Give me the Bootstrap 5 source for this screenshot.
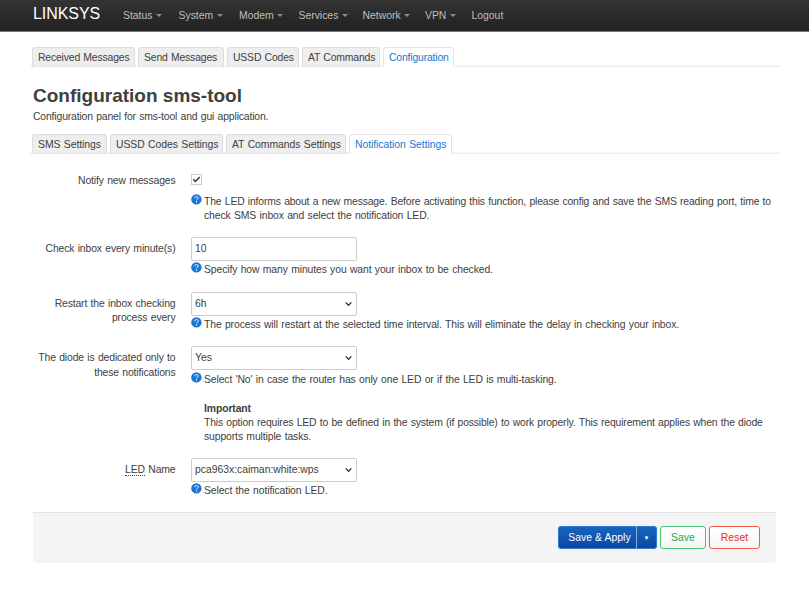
<!DOCTYPE html>
<html lang="en">
<head>
<meta charset="utf-8">
<meta name="viewport" content="width=device-width, initial-scale=1">
<title>LINKSYS - Configuration sms-tool</title>
<link href="https://cdn.jsdelivr.net/npm/bootstrap@5.3.0/dist/css/bootstrap.min.css" rel="stylesheet">
<style>
body{font-family:"Liberation Sans",Arial,sans-serif;font-size:10.4px;line-height:14.3px;letter-spacing:-.1px;word-spacing:.6px;color:#404040;background:#fff}
.topbar{height:32px;padding:0 0 0 33px;background:linear-gradient(#333,#222);border-bottom:1px solid #777}
.topbar .navbar-brand{font-size:16px;line-height:20px;letter-spacing:-.05px;color:#fff;padding:0;margin:0 23px 3px 0;width:67px}
.topbar .navbar-nav{display:grid;grid-template-columns:55.5px 60.5px 59.5px 64px 62.5px 46.5px auto}
.topbar .navbar-nav .nav-link{color:#bfbfbf;padding:0;line-height:30px;letter-spacing:0}
.topbar .dropdown-toggle::after{border-top:3px solid;border-left:3px solid transparent;border-right:3px solid transparent;margin-left:3.5px;vertical-align:1.5px;opacity:.65}
.page{padding:15px 29px 0 30px}
.tabs{display:grid;height:20px;gap:3px;padding-left:2px;border-bottom:0;box-shadow:inset 0 -1.5px #eee}
.tabs-main{grid-template-columns:103px 86px 72px 78px 71px;letter-spacing:-.16px}
.tabs-sub{grid-template-columns:75px 113px 120px 103px;letter-spacing:-.05px}
.tabs .nav-link{height:20px;padding:3px 5px 0;color:#404040;background:#eee;border:1px solid #ddd;border-bottom:1px solid #e6e6e6;border-radius:3px 3px 0 0;margin:0;white-space:nowrap}
.tabs .nav-link.active{color:#1976d2;background:#fff;border-color:#e5e5e5;border-bottom-color:#fff}
h2{font-size:19px;line-height:24px;font-weight:700;margin:17px 0 2px 3px;letter-spacing:0;word-spacing:0}
.descr{margin:0 0 9.7px 3px;letter-spacing:-.15px}
.rows{margin-left:3px}
.cfg-label{width:142.5px;margin-right:15.5px;text-align:right;padding-top:5px;flex:none;white-space:nowrap;letter-spacing:-.13px}
.ctl{width:166px;height:24px;min-height:24px;font-size:10.4px;line-height:14px;padding:4px 3px;border:1px solid #ccc;border-radius:2px;color:#404040;letter-spacing:-.02px}
select.ctl{background-size:7px 6px;background-position:right 4px center;background-image:url("data:image/svg+xml,%3csvg xmlns='http://www.w3.org/2000/svg' viewBox='0 0 7 6'%3e%3cpath fill='none' stroke='%23333' stroke-width='1.3' d='M.6 1.4l2.9 2.9 2.9-2.9'/%3e%3c/svg%3e")}
.hint{padding-left:13px;position:relative;margin-top:2.5px;width:586px;white-space:nowrap;letter-spacing:-.11px}
.hint svg{position:absolute;left:0;top:-1px;width:11px;height:11px}
.snug{letter-spacing:-.157px}
.tick{width:11px;height:11px;display:block}
abbr{text-decoration:none!important;border-bottom:1px dotted #404040;cursor:help}
.r1{height:62.5px;margin-top:20.3px}
.r1 .cfg-label{padding-top:0;margin-top:-.5px}
.r1 .hint{margin-top:9.3px}
.r2{height:55px}
.r3{height:54.7px}
.r4{height:111.5px}
.r5{height:54.3px}
.actions{height:51px;width:743px;padding:0 16px 1px 0;background:#f4f4f4;border-top:1px solid #e2e2e2;border-radius:0 0 3px 3px;gap:3px}
.actions .btn{height:23px;font-size:10.4px;line-height:14px;padding:0;border-radius:3px;letter-spacing:.05px;background:linear-gradient(#fff,#f5f5f5)}
.actions .btn-group>.btn.apply{width:79px;color:#fff;background:linear-gradient(#1565c0,#0d47a1);border-color:#2f79cd;border-right-color:#7eb0e4;padding-left:4px;border-radius:3px 0 0 3px}
.actions .btn-group>.btn.more{width:20px;color:#fff;background:linear-gradient(#1565c0,#0d47a1);border-color:#2f79cd;border-left:0;font-size:6px;margin-left:0;border-radius:0 3px 3px 0}
.actions .save{width:46px;color:#14ae56;border-color:#4cc27d}
.actions .reset{width:51px;color:#f02a1c;border-color:#f65a4b}
</style>
</head>
<body>
<svg width="0" height="0" class="d-none"><symbol id="help" viewBox="0 0 11 11"><circle cx="5.4" cy="5.4" r="5.2" fill="#1976d2"/><path d="M3.8 4.3c0-1.2.8-1.8 1.7-1.8s1.7.6 1.7 1.5c0 1.2-1.6 1.2-1.6 2.4" fill="none" stroke="#fff" stroke-width="1"/><circle cx="5.5" cy="8" r=".65" fill="#fff"/></symbol></svg>
<header class="navbar topbar navbar-expand flex-nowrap justify-content-start">
<a class="navbar-brand" href="#">LINKSYS</a>
<ul class="navbar-nav">
<li class="nav-item"><a class="nav-link dropdown-toggle" href="#">Status</a></li>
<li class="nav-item"><a class="nav-link dropdown-toggle" href="#">System</a></li>
<li class="nav-item"><a class="nav-link dropdown-toggle" href="#">Modem</a></li>
<li class="nav-item"><a class="nav-link dropdown-toggle" href="#">Services</a></li>
<li class="nav-item"><a class="nav-link dropdown-toggle" href="#">Network</a></li>
<li class="nav-item"><a class="nav-link dropdown-toggle" href="#">VPN</a></li>
<li class="nav-item"><a class="nav-link" href="#">Logout</a></li>
</ul>
</header>
<main class="page">
<ul class="nav nav-tabs tabs tabs-main">
<li class="nav-item"><a class="nav-link" href="#">Received Messages</a></li>
<li class="nav-item"><a class="nav-link" href="#">Send Messages</a></li>
<li class="nav-item"><a class="nav-link" href="#">USSD Codes</a></li>
<li class="nav-item"><a class="nav-link" href="#">AT Commands</a></li>
<li class="nav-item"><a class="nav-link active" href="#">Configuration</a></li>
</ul>
<h2>Configuration sms-tool</h2>
<p class="descr">Configuration panel for sms-tool and gui application.</p>
<ul class="nav nav-tabs tabs tabs-sub">
<li class="nav-item"><a class="nav-link" href="#">SMS Settings</a></li>
<li class="nav-item"><a class="nav-link" href="#">USSD Codes Settings</a></li>
<li class="nav-item"><a class="nav-link" href="#">AT Commands Settings</a></li>
<li class="nav-item"><a class="nav-link active" href="#">Notification Settings</a></li>
</ul>
<form class="rows">
<div class="d-flex r1"><label class="cfg-label">Notify new messages</label><div>
<svg class="tick" viewBox="0 0 11 11" role="img" aria-label="checked"><rect x=".5" y=".5" width="10" height="10" fill="#fff" stroke="#ccc"/><path d="M2.3 5.3l2.1 2.1 4.3-4.3" fill="none" stroke="#333" stroke-width="1.4"/></svg>
<div class="hint"><svg><use href="#help"/></svg><span class="snug">The LED informs about a new message. Before activating this function, please config and save the SMS reading port, time to</span><br>check SMS inbox and select the notification LED.</div></div></div>
<div class="d-flex r2"><label class="cfg-label" for="minutes">Check inbox every minute(s)</label><div><input id="minutes" class="form-control ctl" value="10"><div class="hint"><svg><use href="#help"/></svg>Specify how many minutes you want your inbox to be checked.</div></div></div>
<div class="d-flex r3"><label class="cfg-label" for="restart">Restart the inbox checking<br>process every</label><div><select id="restart" class="form-select ctl"><option>6h</option></select><div class="hint"><svg><use href="#help"/></svg>The process will restart at the selected time interval. This will eliminate the delay in checking your inbox.</div></div></div>
<div class="d-flex r4"><label class="cfg-label" for="diode">The diode is dedicated only to<br>these notifications</label><div><select id="diode" class="form-select ctl"><option>Yes</option></select><div class="hint"><svg><use href="#help"/></svg><span class="lh-sm">Select 'No' in case the router has only one LED or if the LED is multi-tasking.</span><br><br><b>Important</b><br><span class="snug">This option requires LED to be defined in the system (if possible) to work properly. This requirement applies when the diode</span><br>supports multiple tasks.</div></div></div>
<div class="d-flex r5"><label class="cfg-label" for="led"><abbr>LED</abbr> Name</label><div><select id="led" class="form-select ctl"><option>pca963x:caiman:white:wps</option></select><div class="hint"><svg><use href="#help"/></svg>Select the notification LED.</div></div></div>
<div class="actions d-flex align-items-center justify-content-end">
<div class="btn-group"><button type="button" class="btn apply">Save &amp; Apply</button><button type="button" class="btn more">▼</button></div>
<button type="button" class="btn save">Save</button>
<button type="button" class="btn reset">Reset</button>
</div>
</form>
</main>
</body>
</html>
